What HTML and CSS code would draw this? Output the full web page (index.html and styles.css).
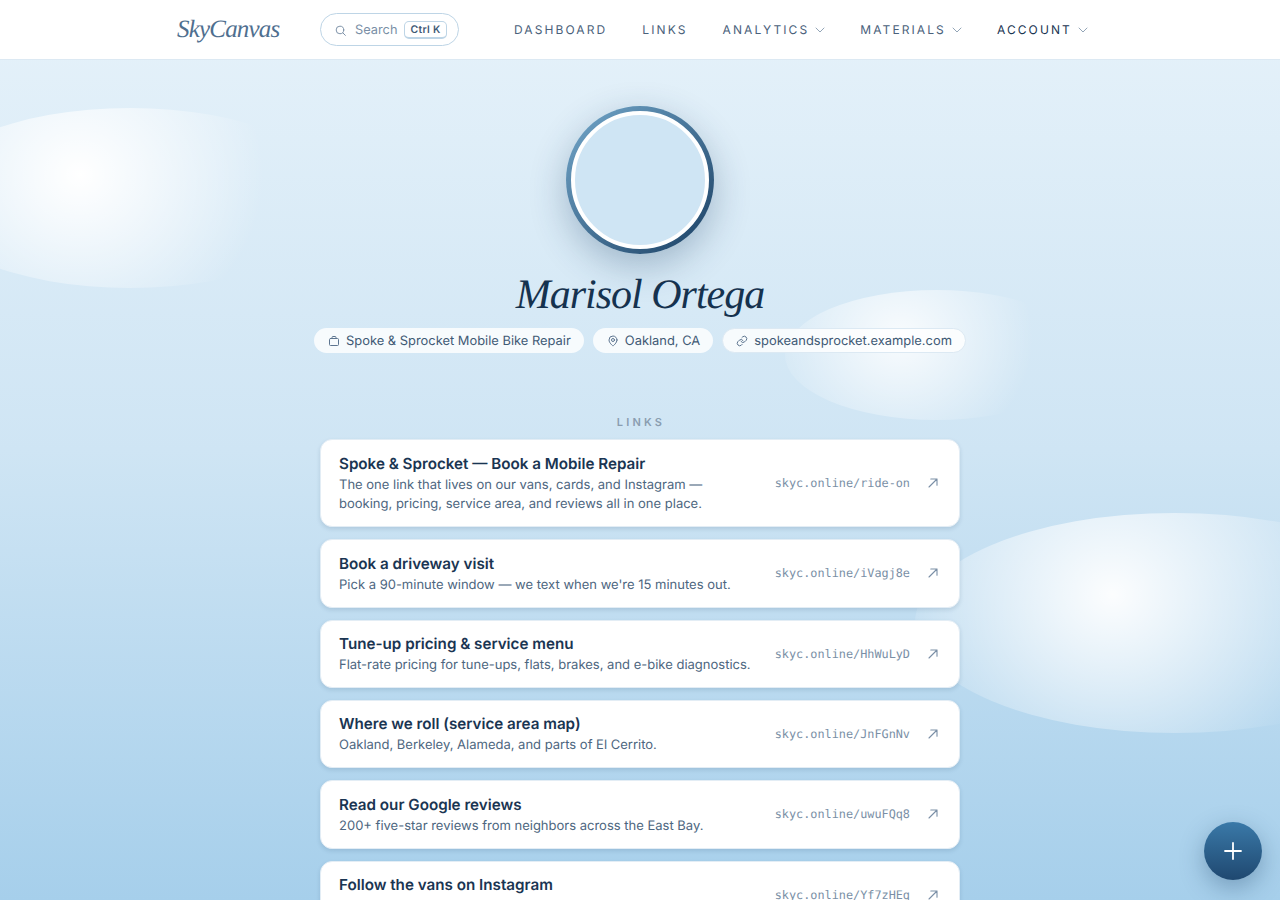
FILE: index.html
```html
<!DOCTYPE html>
<html lang="en">
<head>
  <meta charset="UTF-8">
  <meta name="viewport" content="width=device-width, initial-scale=1.0">
  <title>Marisol Ortega | SkyCanvas</title>
  <link rel="stylesheet" href="styles.css">
</head>
<body>

  <!-- Background clouds -->
  <div class="cloud cloud-left"></div>
  <div class="cloud cloud-mid"></div>
  <div class="cloud cloud-right"></div>

  <header class="topbar">
    <a class="logo" href="#">SkyCanvas</a>
    <div class="search">
      <svg class="search-icon" viewBox="0 0 24 24"><circle cx="11" cy="11" r="7"/><path d="M21 21l-4.5-4.5"/></svg>
      <span>Search</span>
      <kbd>Ctrl K</kbd>
    </div>
    <nav class="nav">
      <a href="#">Dashboard</a>
      <a href="#">Links</a>
      <a href="#">Analytics <svg viewBox="0 0 10 10"><path d="M1 3l4 4 4-4"/></svg></a>
      <a href="#">Materials <svg viewBox="0 0 10 10"><path d="M1 3l4 4 4-4"/></svg></a>
      <a class="active" href="#">Account <svg viewBox="0 0 10 10"><path d="M1 3l4 4 4-4"/></svg></a>
    </nav>
  </header>

  <main class="page">

    <!-- Profile -->
    <section class="profile">
      <div class="avatar-ring"><div class="avatar"></div></div>
      <h1>Marisol Ortega</h1>
      <div class="chips">
        <span class="chip">
          <svg viewBox="0 0 24 24"><rect x="3" y="7" width="18" height="14" rx="2"/><path d="M8 7V5a2 2 0 0 1 2-2h4a2 2 0 0 1 2 2v2"/></svg>
          Spoke &amp; Sprocket Mobile Bike Repair
        </span>
        <span class="chip">
          <svg viewBox="0 0 24 24"><path d="M20 10c0 6-8 12-8 12s-8-6-8-12a8 8 0 0 1 16 0z"/><circle cx="12" cy="10" r="3"/></svg>
          Oakland, CA
        </span>
        <span class="chip chip-link">
          <svg viewBox="0 0 24 24"><path d="M10 13a5 5 0 0 0 7.5.5l3-3a5 5 0 0 0-7-7l-1.7 1.7"/><path d="M14 11a5 5 0 0 0-7.5-.5l-3 3a5 5 0 0 0 7 7l1.7-1.7"/></svg>
          spokeandsprocket.example.com
        </span>
      </div>
    </section>

    <!-- Links -->
    <section class="links">
      <h2>Links</h2>

      <a class="link-card" href="#">
        <div class="link-text">
          <h3>Spoke &amp; Sprocket — Book a Mobile Repair</h3>
          <p>The one link that lives on our vans, cards, and Instagram — booking, pricing, service area, and reviews all in one place.</p>
        </div>
        <span class="short-url">skyc.online/ride-on</span>
        <svg class="arrow" viewBox="0 0 14 14"><path d="M3 11L11 3M4.8 3H11V9.2"/></svg>
      </a>

      <a class="link-card" href="#">
        <div class="link-text">
          <h3>Book a driveway visit</h3>
          <p>Pick a 90-minute window — we text when we're 15 minutes out.</p>
        </div>
        <span class="short-url">skyc.online/iVagj8e</span>
        <svg class="arrow" viewBox="0 0 14 14"><path d="M3 11L11 3M4.8 3H11V9.2"/></svg>
      </a>

      <a class="link-card" href="#">
        <div class="link-text">
          <h3>Tune-up pricing &amp; service menu</h3>
          <p>Flat-rate pricing for tune-ups, flats, brakes, and e-bike diagnostics.</p>
        </div>
        <span class="short-url">skyc.online/HhWuLyD</span>
        <svg class="arrow" viewBox="0 0 14 14"><path d="M3 11L11 3M4.8 3H11V9.2"/></svg>
      </a>

      <a class="link-card" href="#">
        <div class="link-text">
          <h3>Where we roll (service area map)</h3>
          <p>Oakland, Berkeley, Alameda, and parts of El Cerrito.</p>
        </div>
        <span class="short-url">skyc.online/JnFGnNv</span>
        <svg class="arrow" viewBox="0 0 14 14"><path d="M3 11L11 3M4.8 3H11V9.2"/></svg>
      </a>

      <a class="link-card" href="#">
        <div class="link-text">
          <h3>Read our Google reviews</h3>
          <p>200+ five-star reviews from neighbors across the East Bay.</p>
        </div>
        <span class="short-url">skyc.online/uwuFQq8</span>
        <svg class="arrow" viewBox="0 0 14 14"><path d="M3 11L11 3M4.8 3H11V9.2"/></svg>
      </a>

      <a class="link-card" href="#">
        <div class="link-text">
          <h3>Follow the vans on Instagram</h3>
          <p>&nbsp;</p>
        </div>
        <span class="short-url">skyc.online/Yf7zHEq</span>
        <svg class="arrow" viewBox="0 0 14 14"><path d="M3 11L11 3M4.8 3H11V9.2"/></svg>
      </a>
    </section>

  </main>

  <button class="fab" aria-label="Add">
    <svg viewBox="0 0 24 24"><path d="M12 4v16M4 12h16"/></svg>
  </button>

</body>
</html>
```

FILE: styles.css
```css
* {
  box-sizing: border-box;
  margin: 0;
  padding: 0;
}

html, body {
  height: 900px;
  overflow: hidden;
}

body {
  font-family: 'Inter', sans-serif;
  text-rendering: geometricPrecision;
  background: linear-gradient(180deg, #e6f2fa 0%, #cfe5f4 50%, #a6cfeb 100%);
  color: #1a3552;
  position: relative;
}

a {
  color: inherit;
  text-decoration: none;
}

svg {
  fill: none;
  stroke: currentColor;
  stroke-width: 2;
  stroke-linecap: round;
  stroke-linejoin: round;
}

/* Clouds */
.cloud {
  position: absolute;
  border-radius: 50%;
  background: radial-gradient(44% 94% at 38% 37%, #fff 0%, rgba(255, 255, 255, 0.5) 50%, rgba(255, 255, 255, 0) 100%);
}

.cloud-left {
  left: -80px;
  top: 108px;
  width: 420px;
  height: 180px;
}

.cloud-mid {
  left: 785px;
  top: 290px;
  width: 303px;
  height: 130px;
  opacity: 0.85;
}

.cloud-right {
  left: 915px;
  top: 513px;
  width: 520px;
  height: 220px;
  opacity: 0.95;
}

/* Top bar */
.topbar {
  position: relative;
  height: 60px;
  padding-left: 177px;
  display: flex;
  align-items: center;
  background: rgba(255, 255, 255, 0.98);
  border-bottom: 1px solid #dce9f3;
}

.logo {
  width: 143px;
  font-family: 'Liberation Serif', serif;
  font-style: italic;
  font-size: 25px;
  letter-spacing: -0.8px;
  color: #4f6f8f;
}

.search {
  width: 139px;
  height: 33px;
  padding: 1px 13px 0;
  display: flex;
  align-items: center;
  gap: 7px;
  border: 1px solid #bed5e6;
  border-radius: 17px;
  font-size: 12.8px;
  white-space: nowrap;
  color: #7a8fa6;
}

.search-icon {
  width: 13px;
  height: 13px;
  margin-right: 1px;
  flex-shrink: 0;
  stroke-width: 1.8;
}

.search kbd {
  padding: 1px 5px;
  font-family: 'Inter', sans-serif;
  font-size: 10.4px;
  font-weight: 600;
  letter-spacing: 0.3px;
  color: #3f5a75;
  border: 1px solid #bed5e6;
  border-bottom-width: 2px;
  border-radius: 5px;
}

.nav {
  margin-left: 55px;
  display: flex;
  align-items: center;
  gap: 35px;
}

.nav a {
  display: flex;
  align-items: center;
  gap: 6px;
  font-size: 12px;
  letter-spacing: 2.1px;
  text-transform: uppercase;
  color: #4a617b;
}

.nav a.active {
  color: #1a3552;
}

.nav svg {
  width: 10px;
  height: 10px;
  stroke-width: 1;
  color: #93a5b7;
}

/* Profile */
.page {
  position: relative;
  width: 640px;
  margin: 0 auto;
}

.profile {
  padding-top: 46px;
  display: flex;
  flex-direction: column;
  align-items: center;
}

.avatar-ring {
  width: 148px;
  height: 148px;
  padding: 5px;
  border-radius: 50%;
  background: linear-gradient(135deg, #74a8cb 0%, #1a3f63 100%);
  box-shadow: 0 12px 36px rgba(26, 63, 99, 0.3);
}

.avatar {
  width: 100%;
  height: 100%;
  border-radius: 50%;
  background: #cfe5f4;
  border: 4px solid #fff;
}

.profile h1 {
  margin-top: 16px;
  font-family: 'Liberation Serif', serif;
  font-style: italic;
  font-weight: 400;
  font-size: 42px;
  letter-spacing: -1px;
  line-height: 50px;
  color: #15324f;
}

.chips {
  margin-top: 8px;
  display: flex;
  justify-content: center;
  gap: 9px;
  white-space: nowrap;
}

.chip {
  height: 25px;
  padding: 1px 13px 0 14px;
  display: flex;
  align-items: center;
  gap: 6px;
  font-size: 12.9px;
  color: #3f5a75;
  background: rgba(255, 255, 255, 0.8);
  border-radius: 13px;
}

.chip svg {
  width: 12px;
  height: 12px;
  color: #5d7590;
}

.chip-link {
  padding: 1px 13px 0;
  border: 1px solid #dce9f3;
}

/* Links */
.links {
  margin-top: 62px;
  display: flex;
  flex-direction: column;
  gap: 12px;
}

.links h2 {
  margin-bottom: -1.6px;
  padding-left: 2px;
  text-align: center;
  font-size: 11px;
  line-height: 14px;
  font-weight: 600;
  letter-spacing: 3.2px;
  text-transform: uppercase;
  color: #8a9db0;
}

.link-card {
  flex-shrink: 0;
  padding: 14.5px 19px 11.5px 18px;
  display: flex;
  align-items: center;
  background: #fff;
  border: 1px solid #e3edf5;
  border-radius: 12px;
  box-shadow: 0 2px 4px rgba(26, 63, 99, 0.14);
}

.link-text {
  flex: 1;
  min-width: 0;
}

.link-text h3 {
  margin-bottom: 2.6px;
  font-size: 15.2px;
  line-height: 18.24px;
  font-weight: 600;
  color: #1a3552;
}

.link-text p {
  font-size: 13px;
  line-height: 19.5px;
  color: #4d6680;
}

.short-url {
  margin-left: 16px;
  margin-bottom: 3px;
  font-family: 'DejaVu Sans Mono', monospace;
  font-size: 11.84px;
  color: #7a8fa6;
  white-space: nowrap;
}

.arrow {
  width: 14px;
  height: 14px;
  margin-left: 16px;
  margin-bottom: 3px;
  color: #7a8fa6;
  stroke-width: 1.1;
}

/* Floating add button */
.fab {
  position: fixed;
  right: 18px;
  bottom: 20px;
  width: 58px;
  height: 58px;
  display: flex;
  align-items: center;
  justify-content: center;
  border: none;
  border-radius: 50%;
  color: #fff;
  background: linear-gradient(180deg, #3a79a8 0%, #1f4870 100%);
  box-shadow: 0 8px 24px rgba(26, 63, 99, 0.35);
}

.fab svg {
  width: 24px;
  height: 24px;
  stroke-width: 1.8;
}
```
